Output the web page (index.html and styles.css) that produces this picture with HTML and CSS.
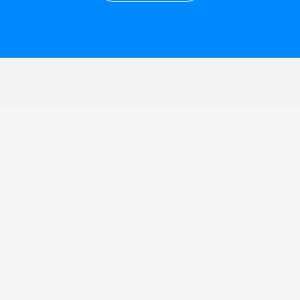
FILE: index.html
```html
<!DOCTYPE html>
<html lang="en">
<head>
  <meta charset="UTF-8">
  <meta name="viewport" content="width=device-width, initial-scale=1">
  <title>Page</title>
  <link rel="stylesheet" href="styles.css">
</head>
<body>
  <header class="topbar">
    <button class="pill" type="button"></button>
  </header>
  <div class="band"></div>
  <main class="content"></main>
</body>
</html>
```
FILE: styles.css
```css
* {
  box-sizing: border-box;
}

html, body {
  margin: 0;
  height: 100%;
}

body {
  font-family: 'Liberation Sans', sans-serif;
  background: #f5f5f5;
  display: flex;
  flex-direction: column;
}

.topbar {
  background: #0088ff;
  height: 58px;
  display: flex;
  justify-content: center;
  align-items: flex-start;
  border-bottom: 1px solid #3d8fd6;
}

.pill {
  width: 104px;
  height: 30px;
  margin-top: -28px;
  border: 1px solid rgba(255, 255, 255, 0.7);
  border-radius: 15px;
  background: transparent;
}

.band {
  height: 48px;
  background: #f1f2f4;
}

.content {
  flex: 1;
}
```
